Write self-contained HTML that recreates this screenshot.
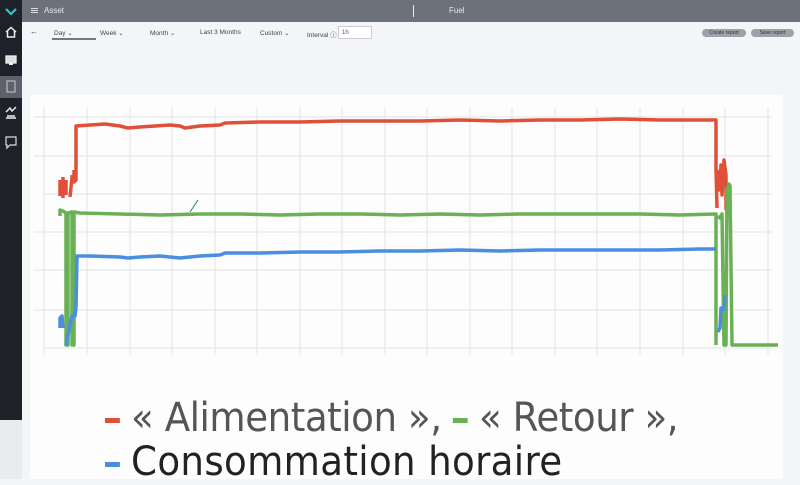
<!DOCTYPE html>
<html><head><meta charset="utf-8"><style>
*{margin:0;padding:0;box-sizing:border-box}
body{width:800px;height:479px;overflow:hidden;background:#f3f5f8;font-family:"Liberation Sans",sans-serif;position:relative}
.sb{position:absolute;left:0;top:0;width:22px;height:420px;background:#1f2129}
.sb2{position:absolute;left:0;top:420px;width:22px;height:59px;background:#e9ebef}
.top{position:absolute;left:22px;top:0;width:778px;height:22px;background:#6c717c;color:#e6e8ec;font-size:8px}
.t{position:absolute;font-size:6.5px;color:#444;top:29px}
.btn{position:absolute;top:29px;height:8px;border-radius:4px;background:#9da1a9;color:#333;font-size:5px;line-height:8px;text-align:center}
.card{position:absolute;left:30px;top:95px;width:753px;height:384px;background:#fdfdfe;border-radius:3px}
.leg{position:absolute;left:105px;font-family:"DejaVu Sans","Liberation Sans",sans-serif;font-size:40px;letter-spacing:-0.5px;white-space:nowrap;transform:scaleX(0.93);transform-origin:left}
.d{display:inline-block;width:16px;height:5px;vertical-align:middle;margin-right:12px}
</style></head><body>
<div class="sb">
<svg width="22" height="160" viewBox="0 0 22 160">
<path d="M6 9 L11 14 L16 9" stroke="#2ec4c4" stroke-width="2.2" fill="none"/>
<path d="M6 32 L11 27.5 L16 32 M7.5 31 V37 H14.5 V31" stroke="#eee" stroke-width="1.5" fill="none"/>
<rect x="6" y="56" width="10" height="7" stroke="#eee" stroke-width="1.3" fill="#ddd"/><rect x="9" y="63" width="4" height="2" fill="#eee"/>
<rect x="0" y="76" width="22" height="22" fill="#5d616b"/>
<rect x="7" y="81" width="8" height="11" stroke="#ccc" stroke-width="1" fill="none"/>
<path d="M6 112 L10 108 L12 111 L16 107 M6 118 H16 M7 116 H15" stroke="#eee" stroke-width="1.4" fill="none"/>
<path d="M6 137 H16 V145 H10 L7 148 V145 H6 Z" stroke="#ddd" stroke-width="1.2" fill="none"/>
</svg></div>
<div class="sb2"></div>
<div class="top">
<div style="position:absolute;left:9px;top:8px;width:7px;height:1px;background:#ddd;box-shadow:0 2px #ddd,0 4px #ddd"></div>
<div style="position:absolute;left:22px;top:6px">Asset</div>
<div style="position:absolute;left:391px;top:5px;width:1px;height:12px;background:#eee"></div>
<div style="position:absolute;left:427px;top:6px">Fuel</div>
</div>
<div class="t" style="left:30px;font-size:8px;top:27px">←</div>
<div class="t" style="left:54px">Day ⌄</div>
<div style="position:absolute;left:52px;top:38px;width:44px;height:2px;background:#777"></div>
<div class="t" style="left:100px">Week ⌄</div>
<div class="t" style="left:150px">Month ⌄</div>
<div class="t" style="left:200px">Last 3 Months</div>
<div class="t" style="left:260px">Custom ⌄</div>
<div class="t" style="left:307px">Interval ⓘ</div>
<div style="position:absolute;left:338px;top:26px;width:34px;height:13px;border:1px solid #ccc;background:#fff;font-size:6px;color:#555;padding:3px 3px">1h</div>
<div class="btn" style="left:702px;width:44px">Create report</div>
<div class="btn" style="left:751px;width:43px">Save report</div>
<div class="card"></div>
<svg style="position:absolute;left:0;top:0" width="800" height="479">
<g stroke="#e2e3e6" stroke-width="1">
<path d="M44 107V355M87 107V355M130 107V355M172 107V355M215 107V355M257 107V355M300 107V355M342 107V355M385 107V355M427 107V355M470 107V355M512 107V355M555 107V355M597 107V355M640 107V355M683 107V355M725 107V355M768 107V355"/>
<path d="M34 117H772M34 156H772M44 194H772M34 232H772M34 270H772M34 310H772M44 348H772"/>
</g>
<g fill="none" stroke-width="3.5" stroke-linejoin="round">
<path stroke="#e05038" d="M60 196V180M63 198V177M66 195V180M70 197L72 178V175M74 170V182L76 180V126L90 125 105 124 120 126 128 128 140 127 155 126 170 125 180 126 185 128 200 126 220 125 225 123 260 122 300 122 340 121 380 121 420 121 460 120 500 121 540 120 580 120 620 119 660 120 700 120 716 120 716 168 717 208M718 170 719 190 721 165 722 195 724 160 726 175 726 210"/>
<path stroke="#6ab055" d="M60 216V210L63 211 66 213 66 345 68 345 68 213 72 212 72 345 74 345 74 212 80 213 120 214 160 215 200 214 240 214 280 215 320 214 360 214 400 215 440 214 480 215 520 214 560 214 600 214 640 214 680 215 716 214 716 345M718 216 720 218 722 214 724 345 726 345 727 190 729 184 730 186 732 345 733 345 778 345"/>
<path stroke="#186" stroke-width="1" d="M190 212L198 200"/>
<path stroke="#4a8ee0" d="M60 328V318L62 316 63 328M66 345 67 340 70 325 72 316 75 316 76 307 77 256 90 256 120 257 128 258 140 257 160 256 180 258 190 257 200 256 220 255 225 253 260 253 300 252 340 252 380 251 420 251 460 250 500 251 540 250 580 250 620 250 660 250 700 249 716 249M718 332 720 328 721 308 724 309 725 295"/>
</g>
</svg>
<div class="leg" style="top:395px;color:#555">
<span class="d" style="background:#e05038"></span>« Alimentation », <span class="d" style="background:#6ab055;margin-left:0"></span>« Retour »,</div>
<div class="leg" style="top:439px;color:#222;letter-spacing:0.35px">
<span class="d" style="background:#4a8ee0"></span>Consommation horaire</div>
</body></html>
